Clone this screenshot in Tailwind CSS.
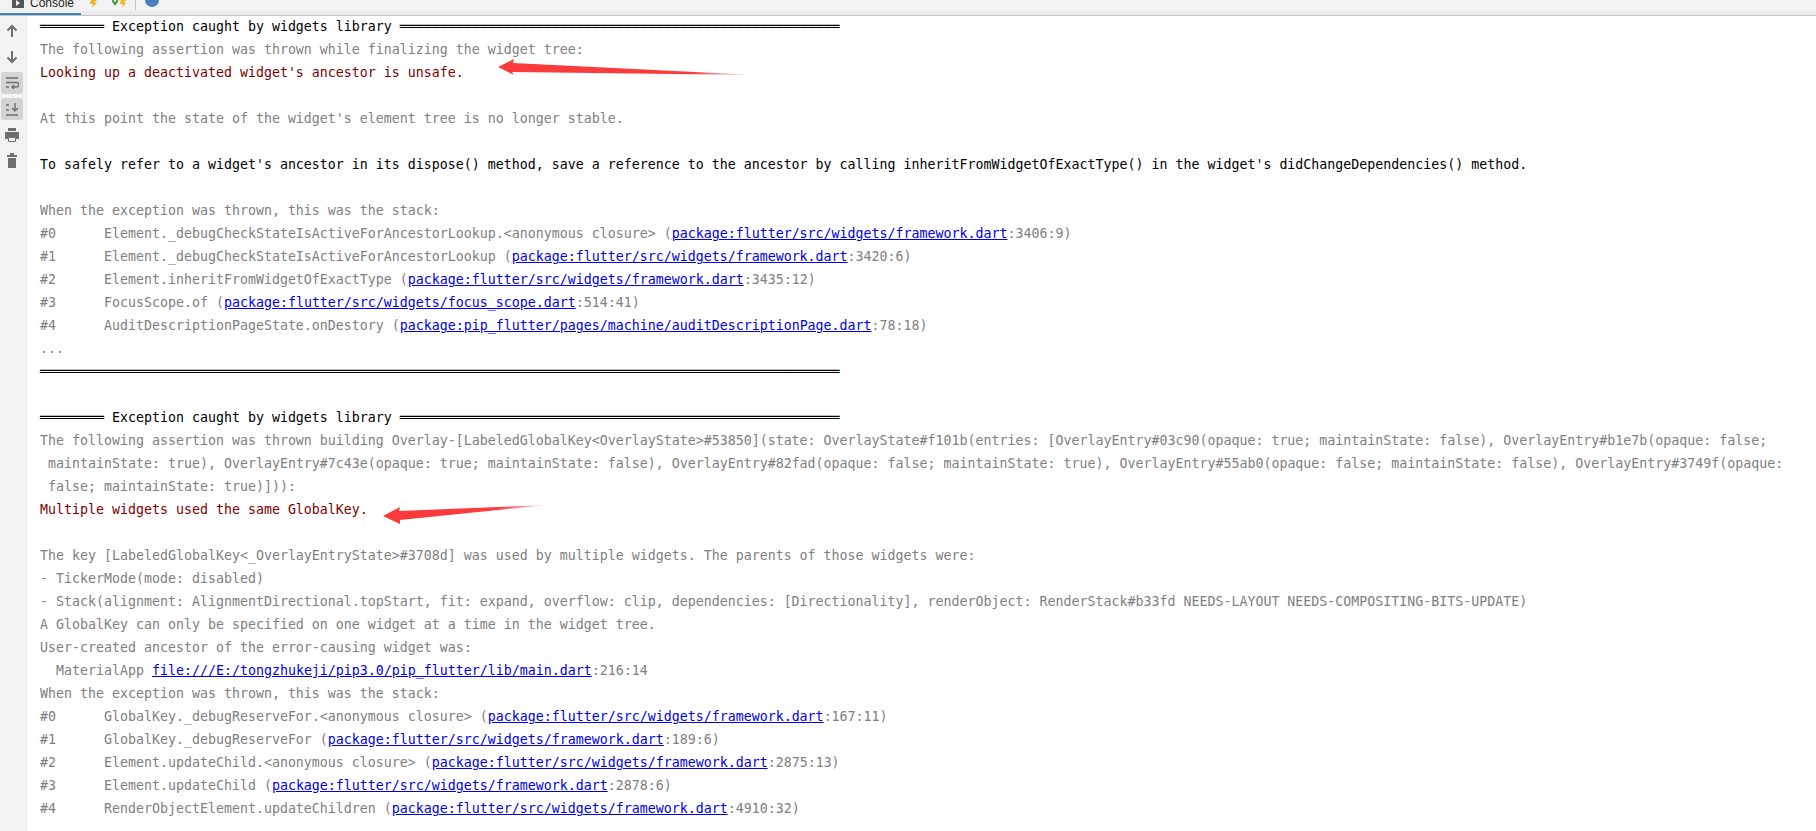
<!DOCTYPE html>
<html><head><meta charset="utf-8"><script src="https://cdn.jsdelivr.net/npm/@tailwindcss/browser@4"></script></head>
<body class="m-0 bg-white overflow-hidden">
<div class="relative w-[1816px] h-[831px] flex flex-col overflow-hidden font-['DejaVu_Sans_Mono',monospace] text-[13.29px] tracking-normal leading-[23px] text-[#808080]">
  <div class="h-[16px] shrink-0 bg-[#f2f2f2] border-b border-[#c4c4c4] flex items-start relative font-['Liberation_Sans',sans-serif] overflow-hidden">
    <div class="absolute left-0 right-0 top-[11px] h-[4px] bg-[#ebebeb]"></div>
    <div class="relative h-[15px] w-[81px] flex items-start pl-[12px] gap-[6px] bg-[#f2f2f2]">
      <svg width="12" height="8" viewBox="0 0 12 8"><rect width="12" height="8" fill="#555"/><path d="M4 0l4 3-4 3z" fill="#eee"/></svg>
      <span class="text-[12px] leading-[12px] text-[#222] -mt-[3px]">Console</span>
      <div class="absolute left-0 bottom-0 w-[81px] h-[2px] bg-[#4083c9]"></div>
    </div>
    <svg width="10" height="8" viewBox="0 0 10 8" class="relative ml-[7px]"><path d="M3 0H9L6.500 3H8.500L4 8 5 4H2z" fill="#f0b429"/></svg>
    <svg width="14" height="8" viewBox="0 0 14 8" class="relative ml-[14px]"><path d="M0 0l3 4 3-4" stroke="#3a9a3a" stroke-width="2" fill="none"/><path d="M9 0h5l-2 3h2l-4 5 1-4H8z" fill="#f0b429"/></svg>
    <div class="relative w-px h-[10px] bg-[#c4c4c4] ml-[9px]"></div>
    <div class="relative ml-[9px] w-[14px] h-[7px] rounded-b-full bg-[#4a7fc0]"></div>
  </div>
  <div class="flex flex-1 min-h-0">
    <aside class="w-[27px] shrink-0 bg-[#f2f2f2] border-r border-[#ebebeb] flex flex-col items-start pl-px pt-[4px] gap-[4px]">
      <svg width="22" height="22" viewBox="0 0 22 22" fill="none" stroke="#6e6e6e" stroke-width="2"><path d="M11 17V6M6.500 10.500L11 6l4.500 4.500"/></svg>
      <svg width="22" height="22" viewBox="0 0 22 22" fill="none" stroke="#6e6e6e" stroke-width="2"><path d="M11 5v11M6.500 11.500L11 16l4.500-4.500"/></svg>
      <div class="w-[22px] h-[22px] rounded-[3px] bg-[#d4d4d4] flex items-center justify-center"><svg width="14" height="14" viewBox="0 0 14 14" fill="none" stroke="#6e6e6e" stroke-width="1.400"><path d="M1 2h12M1 6.500h10.500a2 2 0 0 1 0 4.500H7M9 9l-2 2 2 2M1 11h3"/></svg></div>
      <div class="w-[22px] h-[22px] rounded-[3px] bg-[#d4d4d4] flex items-center justify-center"><svg width="14" height="14" viewBox="0 0 14 14" fill="none" stroke="#6e6e6e" stroke-width="1.400"><path d="M1 13h12M1 3h3M1 8h3M10 1v8M7 6l3 3 3-3"/></svg></div>
      <svg width="22" height="22" viewBox="0 0 22 22"><path d="M7 4h8v3H7zM4 8h14v7h-3v-2H7v2H4z" fill="#6e6e6e"/><path d="M7.500 13.500h7v4h-7z" fill="#f2f2f2" stroke="#6e6e6e"/></svg>
      <svg width="22" height="22" viewBox="0 0 22 22"><path d="M6 5h10v2H6zM9 3h4v2H9zM7 8h8v10H7z" fill="#6e6e6e"/></svg>
    </aside>
    <main class="flex-1 min-w-0 pl-[13px] pr-[6px] -mt-[1px] *:whitespace-pre-wrap *:min-h-[23px]">
<div class="text-black">════════ Exception caught by widgets library ═══════════════════════════════════════════════════════</div>
<div>The following assertion was thrown while finalizing the widget tree:</div>
<div class="text-[#7f0000]">Looking up a deactivated widget's ancestor is unsafe.</div>
<div></div>
<div>At this point the state of the widget's element tree is no longer stable.</div>
<div></div>
<div class="text-black">To safely refer to a widget's ancestor in its dispose() method, save a reference to the ancestor by calling inheritFromWidgetOfExactType() in the widget's didChangeDependencies() method.</div>
<div></div>
<div>When the exception was thrown, this was the stack:</div>
<div>#0      Element._debugCheckStateIsActiveForAncestorLookup.&lt;anonymous closure&gt; (<a class="text-[#0000ee] underline">package:flutter/src/widgets/framework.dart</a>:3406:9)</div>
<div>#1      Element._debugCheckStateIsActiveForAncestorLookup (<a class="text-[#0000ee] underline">package:flutter/src/widgets/framework.dart</a>:3420:6)</div>
<div>#2      Element.inheritFromWidgetOfExactType (<a class="text-[#0000ee] underline">package:flutter/src/widgets/framework.dart</a>:3435:12)</div>
<div>#3      FocusScope.of (<a class="text-[#0000ee] underline">package:flutter/src/widgets/focus_scope.dart</a>:514:41)</div>
<div>#4      AuditDescriptionPageState.onDestory (<a class="text-[#0000ee] underline">package:pip_flutter/pages/machine/auditDescriptionPage.dart</a>:78:18)</div>
<div>...</div>
<div class="text-black">════════════════════════════════════════════════════════════════════════════════════════════════════</div>
<div></div>
<div class="text-black">════════ Exception caught by widgets library ═══════════════════════════════════════════════════════</div>
<div>The following assertion was thrown building Overlay-[LabeledGlobalKey&lt;OverlayState&gt;#53850](state: OverlayState#f101b(entries: [OverlayEntry#03c90(opaque: true; maintainState: false), OverlayEntry#b1e7b(opaque: false;</div>
<div> maintainState: true), OverlayEntry#7c43e(opaque: true; maintainState: false), OverlayEntry#82fad(opaque: false; maintainState: true), OverlayEntry#55ab0(opaque: false; maintainState: false), OverlayEntry#3749f(opaque:</div>
<div> false; maintainState: true)])):</div>
<div class="text-[#7f0000]">Multiple widgets used the same GlobalKey.</div>
<div></div>
<div>The key [LabeledGlobalKey&lt;_OverlayEntryState&gt;#3708d] was used by multiple widgets. The parents of those widgets were:</div>
<div>- TickerMode(mode: disabled)</div>
<div>- Stack(alignment: AlignmentDirectional.topStart, fit: expand, overflow: clip, dependencies: [Directionality], renderObject: RenderStack#b33fd NEEDS-LAYOUT NEEDS-COMPOSITING-BITS-UPDATE)</div>
<div>A GlobalKey can only be specified on one widget at a time in the widget tree.</div>
<div>User-created ancestor of the error-causing widget was:</div>
<div>  MaterialApp <a class="text-[#0000ee] underline">file:///E:/tongzhukeji/pip3.0/pip_flutter/lib/main.dart</a>:216:14</div>
<div>When the exception was thrown, this was the stack:</div>
<div>#0      GlobalKey._debugReserveFor.&lt;anonymous closure&gt; (<a class="text-[#0000ee] underline">package:flutter/src/widgets/framework.dart</a>:167:11)</div>
<div>#1      GlobalKey._debugReserveFor (<a class="text-[#0000ee] underline">package:flutter/src/widgets/framework.dart</a>:189:6)</div>
<div>#2      Element.updateChild.&lt;anonymous closure&gt; (<a class="text-[#0000ee] underline">package:flutter/src/widgets/framework.dart</a>:2875:13)</div>
<div>#3      Element.updateChild (<a class="text-[#0000ee] underline">package:flutter/src/widgets/framework.dart</a>:2878:6)</div>
<div>#4      RenderObjectElement.updateChildren (<a class="text-[#0000ee] underline">package:flutter/src/widgets/framework.dart</a>:4910:32)</div>
    </main>
  </div>
  <svg class="absolute left-[498px] top-[58px]" width="258" height="20" viewBox="0 0 258 20"><defs><linearGradient id="a" x1="0" x2="1"><stop offset="0.75" stop-color="#fb3b3b"/><stop offset="1" stop-color="#fb3b3b" stop-opacity="0.1"/></linearGradient></defs><path d="M0 9L16 1 15 5 257 17 14 14 16 17z" fill="url(#a)"/></svg>
  <svg class="absolute left-[383px] top-[504px]" width="164" height="22" viewBox="0 0 164 22"><defs><linearGradient id="b" x1="0" x2="1"><stop offset="0.7" stop-color="#fb3b3b"/><stop offset="1" stop-color="#fb3b3b" stop-opacity="0.1"/></linearGradient></defs><path d="M0 12L17 3 16 7 164 1 17 16 17 20z" fill="url(#b)"/></svg>
</div>
</body></html>
